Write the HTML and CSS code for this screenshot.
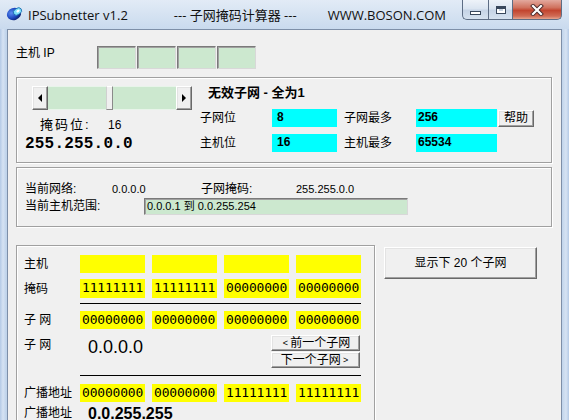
FILE: index.html
```html
<!DOCTYPE html>
<html>
<head>
<meta charset="utf-8">
<link rel="stylesheet" href="styles.css">
</head>
<body>
<div class="window">
  <div class="titlebar">
    <svg class="appicon" width="18" height="16" viewBox="0 0 18 16">
      <defs>
        <radialGradient id="gb" cx="0.35" cy="0.35" r="0.7">
          <stop offset="0" stop-color="#5a8cf0"/>
          <stop offset="0.6" stop-color="#1f48c0"/>
          <stop offset="1" stop-color="#0c2070"/>
        </radialGradient>
      </defs>
      <ellipse cx="8" cy="9" rx="7.2" ry="6" fill="url(#gb)" transform="rotate(-20 8 9)"/>
      <ellipse cx="11.5" cy="6.5" rx="4.5" ry="3.2" fill="#7fe0f8" stroke="#1a6ab0" stroke-width="0.8" transform="rotate(-35 11.5 6.5)"/>
      <ellipse cx="12" cy="6" rx="1.8" ry="1.1" fill="#ffffff" transform="rotate(-35 12 6)"/>
    </svg>
    <span class="title-app">IPSubnetter v1.2</span>
    <span class="title-mid">--- 子网掩码计算器 ---</span>
    <span class="title-site">WWW.BOSON.COM</span>
    <div class="caption">
      <div class="cbtn cmin"><span class="gmin"></span></div>
      <div class="cbtn cmax"><span class="gmax"></span></div>
      <div class="cbtn cclose">
        <svg width="14" height="12" viewBox="0 0 14 12">
          <path d="M3 2 L11 10 M11 2 L3 10" stroke="#4a2a2a" stroke-width="4" stroke-linecap="square"/>
          <path d="M3 2 L11 10 M11 2 L3 10" stroke="#ffffff" stroke-width="2.2" stroke-linecap="square"/>
        </svg>
      </div>
    </div>
  </div>
  <div class="frame">
    <div class="client">
      <div class="iprow">
        <span class="iplbl">主机 IP</span>
        <div class="ipboxes">
          <span class="ipbox sunken"></span>
          <span class="ipbox sunken"></span>
          <span class="ipbox sunken"></span>
          <span class="ipbox sunken"></span>
        </div>
      </div>

      <div class="group g1">
        <div class="g1left">
          <div class="scroll">
            <span class="sarrow raised"><span class="tri-left"></span></span>
            <span class="strack t1"></span>
            <span class="sthumb"></span>
            <span class="strack t2"></span>
            <span class="sarrow raised"><span class="tri-right"></span></span>
          </div>
          <div class="maskbits"><span class="mblbl">掩码位:</span><span class="mbval">16</span></div>
          <div class="maskdot">255.255.0.0</div>
        </div>
        <div class="g1right">
          <div class="invalid">无效子网 - 全为1</div>
          <div class="statrow">
            <span class="slbl">子网位</span>
            <span class="cyan cw1">8</span>
            <span class="slbl slbl2">子网最多</span>
            <span class="cyan cw2">256</span>
            <span class="btn raised help">帮助</span>
          </div>
          <div class="statrow">
            <span class="slbl">主机位</span>
            <span class="cyan cw1">16</span>
            <span class="slbl slbl2">主机最多</span>
            <span class="cyan cw2">65534</span>
          </div>
        </div>
      </div>

      <div class="group g2">
        <div class="netrow">
          <span class="nl1">当前网络:</span>
          <span class="nv1">0.0.0.0</span>
          <span class="nl2">子网掩码:</span>
          <span class="nv2">255.255.0.0</span>
        </div>
        <div class="rangerow">
          <span class="rl">当前主机范围:</span>
          <span class="rangefield sunken">0.0.0.1 到 0.0.255.254</span>
        </div>
      </div>

      <div class="bottom">
        <div class="group g3">
          <div class="brow">
            <span class="blbl">主机</span>
            <span class="yb"></span><span class="yb"></span><span class="yb"></span><span class="yb"></span>
          </div>
          <div class="brow r2">
            <span class="blbl">掩码</span>
            <span class="yb">11111111</span><span class="yb">11111111</span><span class="yb">00000000</span><span class="yb">00000000</span>
          </div>
          <div class="rule rule1"></div>
          <div class="brow r3">
            <span class="blbl">子 网</span>
            <span class="yb">00000000</span><span class="yb">00000000</span><span class="yb">00000000</span><span class="yb">00000000</span>
          </div>
          <div class="subrow">
            <span class="blbl">子 网</span>
            <span class="subval">0.0.0.0</span>
            <div class="navbtns">
              <span class="btn raised nav"><span class="arr">&lt;</span>前一个子网</span>
              <span class="btn raised nav">下一个子网<span class="arr">&gt;</span></span>
            </div>
          </div>
          <div class="rule rule2"></div>
          <div class="brow r5">
            <span class="blbl">广播地址</span>
            <span class="yb">00000000</span><span class="yb">00000000</span><span class="yb">11111111</span><span class="yb">11111111</span>
          </div>
          <div class="bcrow">
            <span class="blbl">广播地址</span>
            <span class="bcval">0.0.255.255</span>
          </div>
        </div>
        <span class="btn raised next20">显示下 20 个子网</span>
      </div>
    </div>
  </div>
</div>
</body>
</html>
```

FILE: styles.css
```css
* { box-sizing: border-box; margin: 0; padding: 0; }

body {
  margin: 0;
  width: 569px;
  height: 420px;
  overflow: hidden;
  background: #c4d6ec;
  font-family: "Liberation Sans", "Noto Sans CJK SC", sans-serif;
  font-size: 12px;
  color: #000;
}

.window {
  width: 569px;
  height: 420px;
  display: flex;
  flex-direction: column;
  background: linear-gradient(90deg, #b4cae6 0px, #d6e3f3 3px, #c0d4eb 6px, #c0d4eb 562px, #d6e3f3 566px, #b4cae6 569px);
}

/* ---------- title bar ---------- */
.titlebar {
  height: 29px;
  flex: none;
  display: flex;
  align-items: flex-start;
  background: linear-gradient(180deg, #e2ebf6 0%, #d3e1f1 60%, #c9daee 100%);
  font-family: "Open Sans", "Noto Sans CJK SC", sans-serif;
  font-size: 13px;
  color: #111;
}

.appicon { margin: 5px 0 0 6px; flex: none; }

.title-app { margin: 6px 0 0 4px; line-height: 18px; }
.title-mid { margin: 6px 0 0 46px; line-height: 18px; }
.title-site { margin: 6px 0 0 31px; line-height: 18px; }

.caption {
  margin-left: auto;
  margin-right: 7px;
  display: flex;
  height: 20px;
}

.cbtn {
  height: 20px;
  display: flex;
  align-items: center;
  justify-content: center;
  border: 1px solid #5d6d84;
  border-top: none;
}

.cmin {
  width: 26px;
  border-radius: 0 0 0 5px;
  border-right: none;
  background: linear-gradient(180deg, #eef3f9 0%, #dbe5f1 45%, #c6d4e6 55%, #d5e1ef 100%);
}

.cmax {
  width: 25px;
  background: linear-gradient(180deg, #eef3f9 0%, #dbe5f1 45%, #c6d4e6 55%, #d5e1ef 100%);
}

.cclose {
  width: 49px;
  border-left: none;
  border-radius: 0 0 5px 0;
  background: linear-gradient(180deg, #e3a99e 0%, #d0725e 40%, #c2452f 55%, #d06c55 85%, #e6a58f 100%);
}

.gmin {
  display: block;
  width: 11px;
  height: 4px;
  margin-top: 7px;
  background: #fff;
  border: 1px solid #39485c;
}

.gmax {
  display: block;
  width: 10px;
  height: 8px;
  border: 1px solid #39485c;
  box-shadow: inset 0 2px 0 #39485c, inset 0 0 0 2px #fff;
  background: #c7d3e2;
}

/* ---------- frame ---------- */
.frame {
  flex: 1;
  display: flex;
  padding: 0 7px 0 7px;
  min-height: 0;
}

.client {
  flex: 1;
  background: #f0f0f0;
  border: 1px solid #7d8fa8;
  border-bottom: none;
  padding: 16px 9px 0 8px;
  overflow: hidden;
}

/* ---------- 3D helpers ---------- */
.raised {
  background: #f0f0f0;
  border: 1px solid;
  border-color: #ffffff #696969 #696969 #ffffff;
  box-shadow: inset -1px -1px 0 #a0a0a0, inset 1px 1px 0 #e3e3e3;
}

.sunken {
  border: 1px solid;
  border-color: #7a7a7a #d8d8d8 #d8d8d8 #7a7a7a;
  box-shadow: inset 1px 1px 0 #a0a0a0;
}

.group {
  border: 1px solid #a0a0a0;
  box-shadow: inset 1px 1px 0 #ffffff, 1px 1px 0 #ffffff;
}

.btn {
  display: flex;
  align-items: center;
  justify-content: center;
  line-height: 14px;
}

/* ---------- IP row ---------- */
.iprow {
  display: flex;
  height: 23px;
}

.iplbl {
  width: 81px;
  line-height: 14px;
}

.ipboxes { display: flex; gap: 1px; }

.ipbox {
  display: block;
  width: 39px;
  height: 23px;
  background: #cce8cf;
}

/* ---------- group 1 ---------- */
.g1 {
  margin-top: 8px;
  height: 86px;
  display: flex;
  padding: 8px 0 0 8px;
}

.g1left { width: 175px; flex: none; }

.scroll {
  margin-left: 7px;
  width: 160px;
  height: 24px;
  display: flex;
}

.sarrow {
  width: 16px;
  flex: none;
  display: flex;
  align-items: center;
  justify-content: center;
}

.tri-left {
  width: 0; height: 0;
  border-top: 4px solid transparent;
  border-bottom: 4px solid transparent;
  border-right: 4px solid #000;
}

.tri-right {
  width: 0; height: 0;
  border-top: 4px solid transparent;
  border-bottom: 4px solid transparent;
  border-left: 4px solid #000;
}

.strack {
  background: #cce8cf;
  border-top: 1px solid #e8f4ea;
  border-bottom: 1px solid #e8f4ea;
}

.t1 { width: 58px; }
.t2 { width: 63px; }

.sthumb {
  width: 7px;
  background: #f0f0f0;
  border: 1px solid;
  border-color: #ffffff #8a8a8a #8a8a8a #d0d0d0;
}

.maskbits {
  margin-top: 7px;
  display: flex;
  line-height: 16px;
}

.mblbl {
  margin-left: 15px;
  width: 68px;
  font-size: 13px;
  letter-spacing: 2px;
}

.mbval { font-size: 12px; }

.maskdot {
  margin-top: 2px;
  font-family: "Liberation Mono", monospace;
  font-weight: bold;
  font-size: 16px;
  line-height: 18px;
  letter-spacing: 0.2px;
}

.g1right { flex: 1; }

.invalid {
  padding-left: 8px;
  font-weight: bold;
  font-size: 13px;
  line-height: 14px;
}

.statrow {
  display: flex;
  align-items: center;
  height: 18px;
  margin-top: 7px;
}

.invalid + .statrow { margin-top: 9px; }

.slbl { width: 72px; line-height: 14px; }
.slbl2 { margin-left: 7px; }

.cyan {
  background: #00ffff;
  height: 18px;
  font-weight: bold;
  line-height: 16px;
  padding-left: 2px;
}

.cw1 { width: 65px; padding-left: 5px; }
.cw2 { width: 81px; }

.help {
  width: 36px;
  height: 17px;
  margin-left: 1px;
  font-size: 12px;
}

/* ---------- group 2 ---------- */
.g2 {
  margin-top: 4px;
  height: 60px;
  padding: 14px 0 0 8px;
  font-size: 11px;
}

.netrow {
  display: flex;
  line-height: 14px;
}

.nl1, .nl2, .rl { font-size: 12px; }
.nv1, .nv2 { font-size: 11px; }

.nl1 { width: 87px; }
.nv1 { width: 89px; }
.nl2 { width: 95px; }

.rangerow {
  display: flex;
  align-items: flex-start;
  margin-top: 2px;
}

.rl { width: 119px; line-height: 14px; padding-top: 1px; }

.rangefield {
  width: 264px;
  height: 17px;
  background: #cce8cf;
  line-height: 15px;
  padding-left: 2px;
  font-size: 11px;
}

/* ---------- bottom ---------- */
.bottom {
  margin-top: 18px;
  display: flex;
  align-items: flex-start;
}

.g3 {
  width: 359px;
  height: 200px;
  flex: none;
  padding: 9px 0 0 7px;
}

.next20 {
  margin: 2px 0 0 9px;
  width: 153px;
  height: 32px;
  font-size: 12px;
}

.brow {
  display: flex;
  align-items: center;
  gap: 7px;
  height: 18px;
}

.brow.r2 { margin-top: 6px; height: 19px; }
.brow.r3 { margin-top: 7px; }
.brow.r5 { margin-top: 8px; }

.blbl {
  width: 49px;
  flex: none;
  line-height: 14px;
  font-size: 12px;
}

.yb {
  width: 65px;
  height: 100%;
  background: #ffff00;
  font-family: "DejaVu Sans Mono", monospace;
  font-size: 13px;
  line-height: 17px;
  padding-left: 2px;
  letter-spacing: -0.2px;
}

.rule {
  margin-left: 56px;
  width: 281px;
  height: 1px;
  background: #000;
}

.rule1 { margin-top: 5px; }
.rule2 { margin-top: 8px; }

.subrow {
  margin-top: 6px;
  display: flex;
  align-items: flex-start;
  height: 32px;
}

.subrow .blbl { width: 64px; padding-top: 3px; }

.subval {
  font-size: 18px;
  line-height: 20px;
  padding-top: 2px;
}

.navbtns {
  margin-left: auto;
  margin-right: 14px;
  display: flex;
  flex-direction: column;
  gap: 1px;
}

.nav {
  width: 89px;
  height: 16px;
  font-size: 12px;
}

.arr { font-size: 9px; margin: 0 2px; }

.bcrow {
  margin-top: 4px;
  display: flex;
}

.bcrow .blbl { width: 64px; }

.bcval {
  font-weight: bold;
  font-size: 16px;
  line-height: 16px;
}
```
